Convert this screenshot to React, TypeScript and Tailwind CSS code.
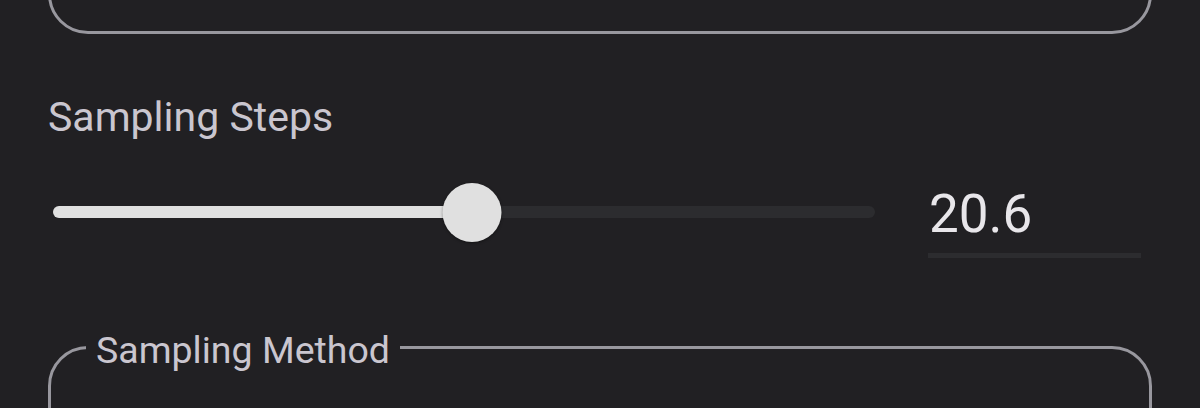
import React from "react";

export default function App() {
  const pct = 51;
  return (
    <div className="w-[1200px] h-[408px] overflow-hidden bg-[#212023] px-12 font-['Roboto',sans-serif]">
      <div className="-mt-[70px] h-[104px] rounded-[40px] border-[3px] border-[#98979e]" />
      <div className="mt-[58px] text-[41px] leading-[50px] text-[#cac6cf]">Sampling Steps</div>
      <div className="mt-[40px] flex items-start">
        <div className="relative ml-[5px] flex h-[60px] w-[822px] items-center">
          <div className="h-[12px] w-full rounded-full bg-[#2c2c2f]" />
          <div
            className="absolute left-0 top-[24px] h-[12px] rounded-full bg-[#e0e0e0]"
            style={{ width: `${pct}%` }}
          />
          <div
            className="absolute top-[1px] h-[59px] w-[59px] -translate-x-1/2 rounded-full bg-[#e0e0e0] shadow-[0_1px_3px_rgba(0,0,0,0.4)]"
            style={{ left: `${pct}%` }}
          />
        </div>
        <div className="ml-[53px] w-[213px]">
          <div className="pl-[1px] text-[53px] leading-[64px] text-[#e8e6ea]">20.6</div>
          <div className="mt-[7px] h-[5px] bg-[#2c2c2f]" />
        </div>
      </div>
      <fieldset className="mt-[58px] h-[150px] rounded-[40px] border-[3px] border-[#98979e] px-[35px]">
        <legend className="px-[10px] pt-[6px] text-[37.5px] text-[#cac6cf]">Sampling Method</legend>
      </fieldset>
    </div>
  );
}
